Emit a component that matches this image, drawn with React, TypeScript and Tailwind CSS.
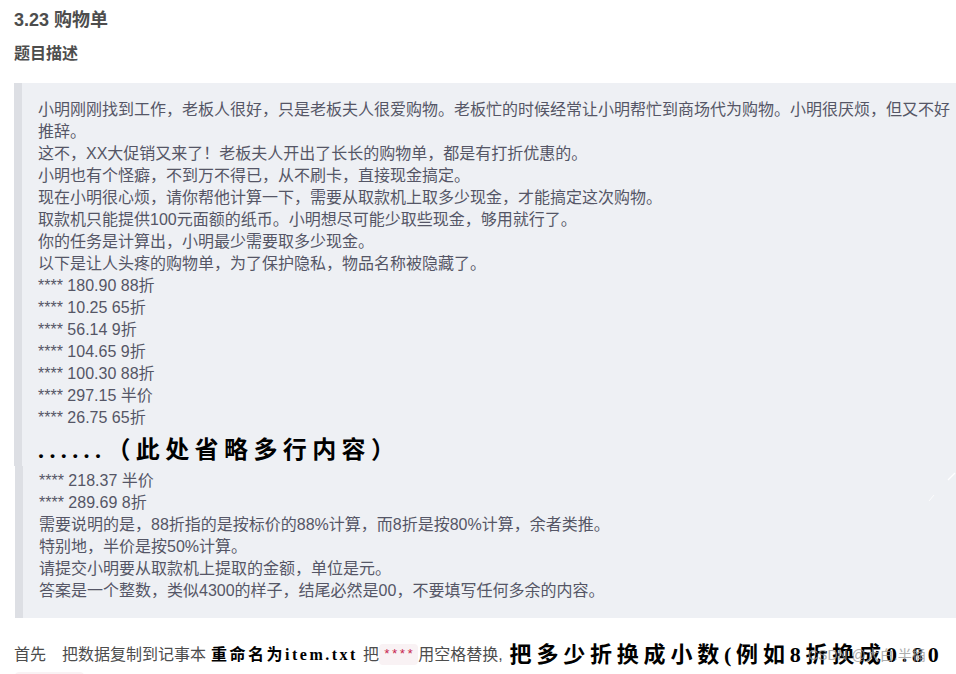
const body = '"Liberation Sans","Noto Sans CJK SC",sans-serif';
const brush = '"Liberation Serif","Noto Sans CJK SC",serif';

const partOne = [
  "小明刚刚找到工作，老板人很好，只是老板夫人很爱购物。老板忙的时候经常让小明帮忙到商场代为购物。小明很厌烦，但又不好推辞。",
  "这不，XX大促销又来了！老板夫人开出了长长的购物单，都是有打折优惠的。",
  "小明也有个怪癖，不到万不得已，从不刷卡，直接现金搞定。",
  "现在小明很心烦，请你帮他计算一下，需要从取款机上取多少现金，才能搞定这次购物。",
  "取款机只能提供100元面额的纸币。小明想尽可能少取些现金，够用就行了。",
  "你的任务是计算出，小明最少需要取多少现金。",
  "以下是让人头疼的购物单，为了保护隐私，物品名称被隐藏了。",
  "**** 180.90 88折",
  "**** 10.25 65折",
  "**** 56.14 9折",
  "**** 104.65 9折",
  "**** 100.30 88折",
  "**** 297.15 半价",
  "**** 26.75 65折",
];

const partTwo = [
  "**** 218.37 半价",
  "**** 289.69 8折",
  "需要说明的是，88折指的是按标价的88%计算，而8折是按80%计算，余者类推。",
  "特别地，半价是按50%计算。",
  "请提交小明要从取款机上提取的金额，单位是元。",
  "答案是一个整数，类似4300的样子，结尾必然是00，不要填写任何多余的内容。",
];

export default function App() {
  return (
    <div
      className="relative h-[674px] w-[956px] overflow-hidden bg-white text-[#4d4d4d]"
      style={{ fontFamily: body }}
    >
      <h2 className="ml-[14px] mt-[9px] text-[18px] font-bold leading-[22px]">3.23 购物单</h2>
      <h3 className="ml-[14px] mt-[12px] text-base font-bold leading-[22px]">题目描述</h3>

      <div className="mt-[18px] ml-[14px] h-[383px] border-l-[8px] border-[#dddfe4] bg-[#eef0f4] pl-[16px] pt-[16px] text-base leading-[22px] text-[#555666]">
        {partOne.map((line) => (
          <p key={line}>{line}</p>
        ))}
        <p
          className="mt-[6px] text-[24px] font-bold leading-[30px] tracking-[5.4px] text-black"
          style={{ fontFamily: brush }}
        >
          ......（此处省略多行内容）
        </p>
      </div>

      <div className="relative ml-[15px] h-[152px] border-l-[8px] border-[#dddfe4] bg-[#eef0f4] pl-[16px] pt-[4px] text-base leading-[22px] text-[#555666]">
        {partTwo.map((line) => (
          <p key={line}>{line}</p>
        ))}
        <svg className="absolute right-0 top-[5px] h-[30px] w-[50px]" viewBox="0 0 50 30" fill="none">
          <path d="M49 2 L42 9" stroke="#ffffff" strokeWidth="1.2" />
          <path d="M28 24 L23 30" stroke="#ffffff" strokeWidth="0.8" />
        </svg>
      </div>

      <div className="mt-[20px] flex h-[33px] items-center whitespace-nowrap pl-[14px] text-base leading-[22px]">
        <span>首先</span>
        <span className="ml-[16px]">把数据复制到记事本</span>
        <span
          className="ml-[5px] text-[16px] font-bold tracking-[2.5px] text-black"
          style={{ fontFamily: brush }}
        >
          重命名为item.txt
        </span>
        <span className="ml-[5px]">把</span>
        <code
          className="rounded-[4px] bg-[#f9f2f4] px-[4px] py-[1px] text-[13px] leading-[19px] text-[#c7254e]"
          style={{ fontFamily: '"Liberation Mono",monospace' }}
        >
          ****
        </code>
        <span>用空格替换,</span>
        <span
          className="ml-[7px] text-[22px] font-bold tracking-[4.8px] text-black"
          style={{ fontFamily: brush }}
        >
          把多少折换成小数(例如8折换成0.80
        </span>
      </div>

      <div className="ml-[15px] mt-[1px] h-[8px] w-[69px] rounded-[4px] bg-[#f9f2f4]" />

      <span className="absolute left-[808px] top-[646px] text-[14px] leading-[18px] text-[#9a9a9a] opacity-80">
        CSDN @大白.半桶
      </span>
    </div>
  );
}
